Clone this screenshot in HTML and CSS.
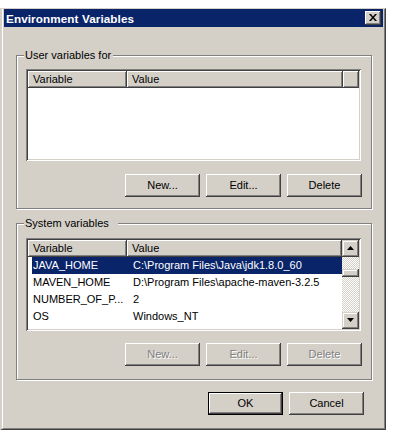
FILE: index.html
```html
<!DOCTYPE html>
<html lang="en">
<head>
  <meta charset="UTF-8" />
  <title>Environment Variables</title>
  <link rel="stylesheet" href="styles.css">
</head>
<body>
  <div class="window">
    <div class="frame">
      <!-- Title bar -->
      <div class="titlebar">
        <span class="title">Environment Variables</span>
        <div class="close">
          <svg width="8" height="7" viewBox="0 0 8 7">
            <path d="M0 0h2l2 2.5L6 0h2L5 3.5 8 7H6L4 4.5 2 7H0l3-3.5z" fill="#000"/>
          </svg>
        </div>
      </div>

      <div class="client">
        <!-- User variables -->
        <div class="group group-user">
          <div class="legend">User variables for</div>
          <div class="list list-user">
            <div class="header">
              <div class="col col-var">Variable</div>
              <div class="col col-val">Value</div>
              <div class="col col-fill"></div>
            </div>
          </div>
          <div class="buttons">
            <div class="btn">New...</div>
            <div class="btn">Edit...</div>
            <div class="btn">Delete</div>
          </div>
        </div>

        <!-- System variables -->
        <div class="group group-system">
          <div class="legend legend-system">System variables</div>
          <div class="list list-system">
            <div class="list-main">
              <div class="header">
                <div class="col col-var">Variable</div>
                <div class="col col-val col-val-sys">Value</div>
              </div>
              <div class="rows">
                <div class="row selected"><div class="cell cell-var">JAVA_HOME</div><div class="cell cell-val">C:\Program Files\Java\jdk1.8.0_60</div></div>
                <div class="row"><div class="cell cell-var">MAVEN_HOME</div><div class="cell cell-val">D:\Program Files\apache-maven-3.2.5</div></div>
                <div class="row"><div class="cell cell-var">NUMBER_OF_P...</div><div class="cell cell-val">2</div></div>
                <div class="row"><div class="cell cell-var">OS</div><div class="cell cell-val">Windows_NT</div></div>
              </div>
            </div>
            <div class="scrollbar">
              <div class="sb-btn">
                <svg width="7" height="4" viewBox="0 0 7 4"><path d="M3.5 0L7 4H0z" fill="#000"/></svg>
              </div>
              <div class="sb-track">
                <div class="sb-thumb"></div>
              </div>
              <div class="sb-btn">
                <svg width="7" height="4" viewBox="0 0 7 4"><path d="M0 0h7L3.5 4z" fill="#000"/></svg>
              </div>
            </div>
          </div>
          <div class="buttons">
            <div class="btn disabled">New...</div>
            <div class="btn disabled">Edit...</div>
            <div class="btn disabled">Delete</div>
          </div>
        </div>

        <!-- Dialog buttons -->
        <div class="dialog-buttons">
          <div class="btn default">OK</div>
          <div class="btn">Cancel</div>
        </div>
      </div>
    </div>
  </div>
</body>
</html>
```

FILE: styles.css
```css
body {
  margin: 0;
  background: #fff;
  font-family: 'Liberation Sans', Arial, sans-serif;
  font-size: 11px;
  color: #000;
}

/* Window chrome */
.window {
  margin-top: 8px;
  width: 386px;
  height: 422px;
  box-sizing: border-box;
  background: #d4d0c8;
  border-style: solid;
  border-width: 1px 1px 1px 2px;
  border-color: #d4d0c8 #404040 #404040 #d4d0c8;
}
.frame {
  height: 100%;
  box-sizing: border-box;
  border-style: solid;
  border-width: 0 1px 1px 1px;
  border-color: #fff #808080 #808080 #fff;
  padding: 0 1px 1px 1px;
  display: flex;
  flex-direction: column;
}
.titlebar {
  height: 18px;
  background: #0a246a;
  display: flex;
  align-items: center;
  justify-content: space-between;
  padding: 0 2px 0 2px;
}
.title {
  color: #fff;
  font-weight: bold;
  font-size: 11.7px;
  letter-spacing: 0.1px;
}
.close {
  width: 16px;
  height: 14px;
  box-sizing: border-box;
  background: #d4d0c8;
  box-shadow: inset -1px -1px 0 #404040, inset 1px 1px 0 #fff, inset -2px -2px 0 #808080;
  display: flex;
  align-items: center;
  justify-content: center;
  padding: 0 1px 1px 0;
}

.client {
  flex: 1;
  padding: 28px 10px 0 12px;
}

/* Group boxes */
.group {
  position: relative;
  width: 356px;
  box-sizing: border-box;
  border: 1px solid #808080;
  box-shadow: inset 1px 1px 0 #fff, 1px 1px 0 #fff;
  padding: 13px 9px 0 9px;
}
.group-user {
  height: 154px;
}
.group-system {
  height: 157px;
  margin-top: 14px;
}
.legend {
  position: absolute;
  top: -7px;
  left: 7px;
  line-height: 13px;
  padding: 0 2px 0 1px;
  background: #d4d0c8;
}
.legend-system {
  padding-right: 9px;
}

/* List views */
.list {
  box-sizing: border-box;
  width: 335px;
  background: #fff;
  padding: 2px;
  box-shadow: inset 1px 1px 0 #808080, inset -1px -1px 0 #fff, inset 2px 2px 0 #404040, inset -2px -2px 0 #d4d0c8;
}
.list-user {
  height: 92px;
}
.list-system {
  height: 93px;
  margin-top: 1px;
  display: flex;
}
.list-main {
  flex: 1;
  display: flex;
  flex-direction: column;
  overflow: hidden;
}
.header {
  display: flex;
  height: 17px;
}
.col {
  box-sizing: border-box;
  height: 17px;
  line-height: 16px;
  padding-left: 5px;
  background: #d4d0c8;
  box-shadow: inset -1px -1px 0 #404040, inset 1px 1px 0 #fff, inset -2px -2px 0 #808080;
}
.col-var {
  width: 99px;
}
.col-val {
  width: 216px;
}
.col-val-sys {
  width: 215px;
}
.col-fill {
  flex: 1;
}
.rows {
  flex: 1;
  overflow: hidden;
}
.row {
  display: flex;
  height: 17px;
  line-height: 17px;
  margin-left: 4px;
  white-space: nowrap;
}
.row.selected {
  background: #0a246a;
  color: #fff;
}
.cell-var {
  width: 95px;
  padding-left: 1px;
  box-sizing: border-box;
}
.cell-val {
  padding-left: 6px;
}

/* Scrollbar */
.scrollbar {
  width: 17px;
  display: flex;
  flex-direction: column;
}
.sb-btn {
  height: 17px;
  box-sizing: border-box;
  background: #d4d0c8;
  box-shadow: inset -1px -1px 0 #404040, inset 1px 1px 0 #d4d0c8, inset -2px -2px 0 #808080, inset 2px 2px 0 #fff;
  display: flex;
  align-items: center;
  justify-content: center;
  padding: 0 1px 1px 0;
}
.sb-track {
  flex: 1;
  background: repeating-conic-gradient(#fff 0 25%, #d4d0c8 0 50%) 0 0 / 2px 2px;
  padding-top: 12px;
}
.sb-thumb {
  height: 8px;
  background: #d4d0c8;
  box-shadow: inset -1px -1px 0 #404040, inset 1px 1px 0 #d4d0c8, inset -2px -2px 0 #808080, inset 2px 2px 0 #fff;
}

/* Buttons */
.buttons {
  display: flex;
  justify-content: flex-end;
  gap: 6px;
  margin-top: 13px;
}
.group-system .buttons {
  margin-top: 12px;
}
.btn {
  width: 75px;
  height: 23px;
  box-sizing: border-box;
  background: #d4d0c8;
  box-shadow: inset -1px -1px 0 #404040, inset 1px 1px 0 #fff, inset -2px -2px 0 #808080;
  display: flex;
  align-items: center;
  justify-content: center;
  padding-bottom: 1px;
}
.btn.disabled {
  color: #808080;
  text-shadow: 1px 1px 0 #fff;
}
.btn.default {
  box-shadow: inset 0 0 0 1px #000, inset -2px -2px 0 #404040, inset 2px 2px 0 #fff, inset -3px -3px 0 #808080;
}
.dialog-buttons {
  display: flex;
  justify-content: flex-end;
  gap: 6px;
  margin-top: 12px;
  padding-right: 9px;
}
```
